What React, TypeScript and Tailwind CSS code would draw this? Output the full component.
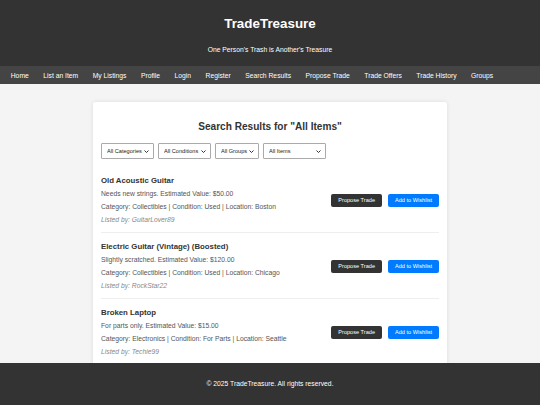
import React from "react";

const navLinks = [
  "Home",
  "List an Item",
  "My Listings",
  "Profile",
  "Login",
  "Register",
  "Search Results",
  "Propose Trade",
  "Trade Offers",
  "Trade History",
  "Groups",
];

const filters = [
  { label: "All Categories", w: "w-[53px]" },
  { label: "All Conditions", w: "w-[53px]" },
  { label: "All Groups", w: "w-[44px]" },
  { label: "All Items", w: "w-[63px]" },
];

const items = [
  {
    title: "Old Acoustic Guitar",
    desc: "Needs new strings. Estimated Value: $50.00",
    meta: "Category: Collectibles | Condition: Used | Location: Boston",
    user: "GuitarLover89",
  },
  {
    title: "Electric Guitar (Vintage) (Boosted)",
    desc: "Slightly scratched. Estimated Value: $120.00",
    meta: "Category: Collectibles | Condition: Used | Location: Chicago",
    user: "RockStar22",
  },
  {
    title: "Broken Laptop",
    desc: "For parts only. Estimated Value: $15.00",
    meta: "Category: Electronics | Condition: For Parts | Location: Seattle",
    user: "Techie99",
  },
];

function Chevron() {
  return (
    <svg
      viewBox="0 0 10 6"
      className="pointer-events-none absolute right-[5px] top-[7px] h-[3px] w-[5px]"
    >
      <path d="M1 1l4 4 4-4" fill="none" stroke="#333" strokeWidth="2" />
    </svg>
  );
}

export default function App() {
  return (
    <div
      className="h-screen overflow-hidden bg-[#f4f4f4] text-[#333]"
      style={{ fontFamily: '"Liberation Sans", Arial, sans-serif' }}
    >
      <header className="bg-[#333] pt-[16px] pb-[12px] text-center text-white">
        <h1 className="text-[13.4px] font-bold leading-[16px]">TradeTreasure</h1>
        <p className="mt-[14px] text-[6.75px] leading-[8px]">
          One Person's Trash is Another's Treasure
        </p>
      </header>
      <nav className="flex h-[18px] items-center bg-[#444] px-[3.5px] pt-[1px]">
        {navLinks.map((l) => (
          <a key={l} href="#" className="px-[7.25px] text-[6.75px] leading-[8px] text-white">
            {l}
          </a>
        ))}
      </nav>
      <main className="px-[93px] pt-[18px]">
        <div className="rounded-[2px] bg-white px-[8px] pt-[19px] pb-[20px] shadow-[0_0_4px_rgba(0,0,0,0.1)]">
          <h2 className="text-center text-[10.1px] font-bold leading-[12px] text-[#333]">
            Search Results for "All Items"
          </h2>
          <div className="mt-[10px] mb-[8px] flex gap-[4px]">
            {filters.map((f) => (
              <div key={f.label} className={`relative ${f.w}`}>
                <select className="block h-[16px] w-full appearance-none rounded-[1px] border border-[#aaa] bg-white pl-[5px] text-[5.6px] text-[#222] outline-none">
                  <option>{f.label}</option>
                </select>
                <Chevron />
              </div>
            ))}
          </div>
          {items.map((it) => (
            <div
              key={it.title}
              className="flex items-center justify-between border-b border-[#eee] pt-[7px] pb-[6px]"
            >
              <div>
                <h3 className="text-[7.8px] font-bold leading-[13px] text-[#333]">{it.title}</h3>
                <p className="text-[6.75px] leading-[13px] text-[#555]">{it.desc}</p>
                <p className="text-[6.75px] leading-[13px] text-[#555]">{it.meta}</p>
                <p className="text-[6.75px] italic leading-[13px] text-[#888]">
                  Listed by: {it.user}
                </p>
              </div>
              <div className="flex gap-[6px]">
                <button className="h-[13px] rounded-[2px] bg-[#333] px-[7px] text-[5.6px] leading-[13px] text-white">
                  Propose Trade
                </button>
                <button className="h-[13px] rounded-[2px] bg-[#007bff] px-[7px] text-[5.6px] leading-[13px] text-white">
                  Add to Wishlist
                </button>
              </div>
            </div>
          ))}
        </div>
      </main>
      <footer className="fixed inset-x-0 bottom-0 flex h-[42px] items-center justify-center bg-[#333] text-[6.75px] text-white">
        © 2025 TradeTreasure. All rights reserved.
      </footer>
    </div>
  );
}
